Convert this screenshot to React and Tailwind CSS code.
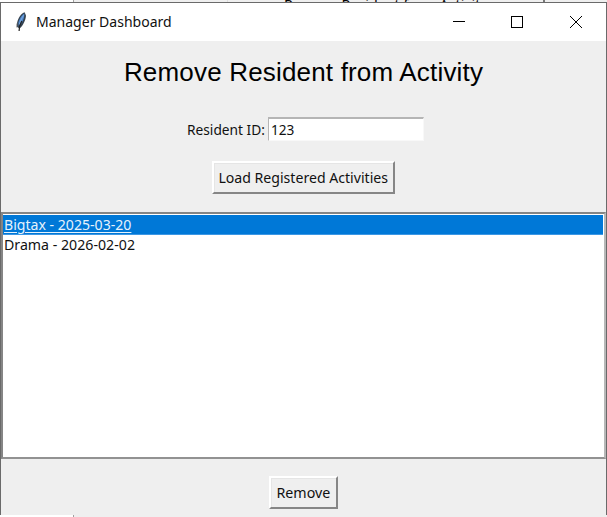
import React from 'react';

const UI = "font-['Noto_Sans',sans-serif] text-[#111111] whitespace-nowrap";

function Feather() {
  return (
    <svg className="ml-[14px] mt-[8px] h-[22px] w-[12px] shrink-0" viewBox="0 0 12 22">
      <path d="M9.6 1.2C6.5 2 3.4 6.5 2.2 11.2L1.8 15.8L4.6 17.5C7.6 15.2 10.6 10 11 4.6Z" fill="#35424f" />
      <path d="M9.4 2.4C7 3.7 4.4 7.5 3.4 11.5L3.8 15.6C6.9 12.5 9.4 8 9.4 2.4Z" fill="#4b86cf" />
      <path d="M8.6 4.3C6.8 7 5 11 4.3 13.5" fill="none" stroke="#8fb6e2" strokeWidth="0.8" />
      <path d="M6.8 10L4.6 15L4.1 20" fill="none" stroke="#222" strokeWidth="1.2" />
      <path d="M1.8 12.5L1.8 16.5" stroke="#888" strokeWidth="0.8" />
    </svg>
  );
}

function TitleBar() {
  return (
    <div className="flex h-[38px] shrink-0 bg-white">
      <Feather />
      <div className={`${UI} ml-[9px] h-[38px] w-[136px] text-[15px] leading-[36px]`}>
        <span className="inline-block origin-left scale-x-[0.935]">Manager Dashboard</span>
      </div>
      <svg className="ml-auto h-[38px] w-[176px] shrink-0" viewBox="0 0 176 38" fill="none" stroke="#000" shapeRendering="crispEdges">
        <path d="M23 18.5h12M81.500 13.500h11v11h-11z" />
        <path d="M140 13l12 12M152 13l-12 12" shapeRendering="auto" strokeWidth="1" />
      </svg>
    </div>
  );
}

function RaisedButton({ className, children }) {
  return (
    <button className={`${UI} flex items-center justify-center border-2 border-t-white border-l-white border-r-[#868686] border-b-[#868686] bg-[#efefef] pb-[2px] text-[15px] leading-5 shadow-[inset_1px_1px_0_#e5e5e5] ${className}`}>
      {children}
    </button>
  );
}

export default function App() {
  return (
    <div className="flex h-[517px] w-[607px] flex-col overflow-hidden bg-white">
      <div className="flex h-[2px] shrink-0 overflow-hidden bg-[#efefef]">
        <div className="h-[2px] w-[74px] shrink-0 border-r border-[#a0a0a0] bg-white" />
        <div className="h-[2px] w-[154px] shrink-0 border-r border-[#dedede]" />
        <div className="ml-[56px] w-[259px] font-['Noto_Sans',sans-serif] text-[15px] leading-[8px] whitespace-nowrap text-black">
          <span className="inline-block origin-left scale-x-[0.95]">Remove Resident from Activity</span>
        </div>
        <div className="w-[2px] bg-[#777777]" />
      </div>
      <div className="flex h-[513px] shrink-0 flex-col border border-b-0 border-[#6a6a6a] bg-[#efefef]">
        <TitleBar />
        <h1 className="mt-[15px] flex h-8 shrink-0 justify-center font-['Liberation_Sans',Arial,sans-serif] text-[26px] leading-8 tracking-[0.18px] whitespace-nowrap text-black">
          Remove Resident from Activity
        </h1>
        <div className="mt-[29px] flex h-6 shrink-0 pl-[186px]">
          <div className={`${UI} w-[81px] text-[15px] leading-6`}>
            <span className="inline-block origin-left scale-x-[0.915]">Resident ID:</span>
          </div>
          <div className={`${UI} h-6 w-[156px] border border-t-2 border-t-[#b5b5b5] border-l-[#b5b5b5] border-r-[#f8f8f8] border-b-[#f8f8f8] bg-white pl-[2px] text-[15px] leading-[21px]`}>
            <span className="inline-block origin-left scale-x-[0.91]">123</span>
          </div>
        </div>
        <RaisedButton className="mt-5 ml-[211px] h-[33px] w-[183px] shrink-0">
          <span className="scale-x-[0.94]">Load Registered Activities</span>
        </RaisedButton>
        <div className="mt-[18px] h-[247px] shrink-0 border-2 border-t-[#858585] border-b-[#929292] border-l-[#858585] border-r-[#b8b8b8] bg-white">
          <div className={`${UI} mt-px mr-px h-5 border-b border-[#3c97e4] bg-[#0078d7] pl-px text-[15px] leading-[18px]`}>
            <span className="inline-block origin-left scale-x-[0.94] text-[#e6f2fc] underline underline-offset-2">Bigtax - 2025-03-20</span>
          </div>
          <div className={`${UI} h-5 pl-px text-[15px] leading-[18px]`}>
            <span className="inline-block origin-left scale-x-[0.945]">Drama - 2026-02-02</span>
          </div>
        </div>
        <RaisedButton className="mt-[17px] ml-[268px] h-[33px] w-[69px] shrink-0">
          <span className="scale-x-[0.95]">Remove</span>
        </RaisedButton>
      </div>
      <div className="flex h-[2px] shrink-0 bg-[#efefef]">
        <div className="w-[74px] border-r border-[#a0a0a0] bg-white" />
      </div>
    </div>
  );
}
